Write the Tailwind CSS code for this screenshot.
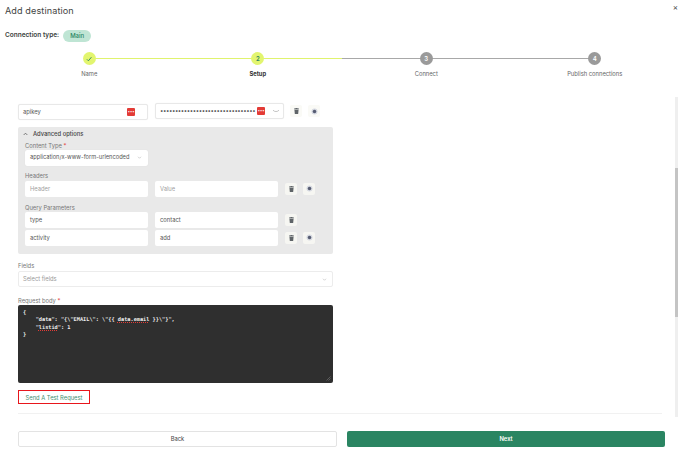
<!DOCTYPE html>
<html lang="en">
  <head>
    <meta charset="UTF-8" />
    <title>Add destination</title>
    <script src="https://cdn.jsdelivr.net/npm/@tailwindcss/browser@4"></script>
  </head>
  <body class="bg-white text-[#3b3f3e] font-['Inter',sans-serif]">
    <div class="relative w-[688px] h-[452px] overflow-hidden">
      <!-- Header -->
      <h1 class="pl-[5px] pt-[4px] h-[24px] text-[9.1px] leading-[13px] text-[#3f4443] font-normal tracking-[0.1px]">Add destination</h1>
      <button class="absolute right-[10px] top-[4px] text-[#444] text-[8px] leading-[6px]">×</button>

      <div class="flex items-center gap-[4px] pl-[5px] mt-[3px] pt-[4px] box-content h-[10px]">
        <span class="text-[6.5px] font-semibold">Connection type:</span>
        <span class="h-[12px] px-[7px] rounded-full bg-[#bfe5d4] text-[#2a8562] text-[6px] leading-[12px] font-medium">Main</span>
      </div>

      <!-- Stepper -->
      <div class="relative grid grid-cols-4 w-[674px] ml-[5px] mt-[11px] h-[30px]">
        <div class="absolute left-[84px] top-[6px] w-[253px] h-[1px] bg-[#e0f36e]"></div>
        <div class="absolute left-[337px] top-[6px] w-[253px] h-[1px] bg-[#a8a8a8]"></div>
        <div class="relative flex flex-col items-center">
          <span class="w-[13px] h-[13px] rounded-full bg-[#e2f56f] flex items-center justify-center">
            <svg width="6" height="6" viewBox="0 0 10 10" fill="none" stroke="#2a8562" stroke-width="1.5"><path d="M1.5 5.5l2.5 2.5 5-6"/></svg>
          </span>
          <span class="mt-[5px] text-[5.8px] leading-[8px] text-[#666]">Name</span>
        </div>
        <div class="relative flex flex-col items-center">
          <span class="w-[13px] h-[13px] rounded-full bg-[#e2f56f] text-[#2a8562] text-[6px] font-semibold flex items-center justify-center">2</span>
          <span class="mt-[5px] text-[5.8px] leading-[8px] font-bold text-[#333]">Setup</span>
        </div>
        <div class="relative flex flex-col items-center">
          <span class="w-[13px] h-[13px] rounded-full bg-[#9a9a9a] text-white text-[6px] font-semibold flex items-center justify-center">3</span>
          <span class="mt-[5px] text-[5.8px] leading-[8px] text-[#666]">Connect</span>
        </div>
        <div class="relative flex flex-col items-center">
          <span class="w-[13px] h-[13px] rounded-full bg-[#9a9a9a] text-white text-[6px] font-semibold flex items-center justify-center">4</span>
          <span class="mt-[5px] text-[5.8px] leading-[8px] text-[#666]">Publish connections</span>
        </div>
      </div>

      <!-- Scrollbar -->
      <div class="absolute left-[675px] top-[97px] w-[3px] h-[320px] bg-[#efefef]">
        <div class="mt-[71px] h-[149px] bg-[#c4c4c4]"></div>
      </div>

      <!-- Form -->
      <div class="pl-[18px] w-[333px] mt-[21px] box-content">
        <div class="flex items-start w-[315px]">
          <div class="w-[130px] h-[16px] mt-[1px] bg-white border border-[#e8e8e8] rounded-[2px] shadow-[0_0_1px_rgba(0,0,0,0.08)] flex items-center justify-between pl-[4px] pr-[12px] text-[5.8px] text-[#555]">
            <span>apikey</span>
            <span class="w-[8px] h-[8px] bg-[#e33b36] rounded-[1px] text-white text-[4px] leading-[7px] text-center">•••</span>
          </div>
          <div class="ml-[7px] w-[129px] h-[16px] bg-white border border-[#e8e8e8] rounded-[2px] shadow-[0_0_1px_rgba(0,0,0,0.08)] flex items-center pl-[4px] pr-[3px]">
            <span class="text-[6px] leading-[8px] tracking-[-0.4px] text-[#444] w-[97px] whitespace-nowrap">••••••••••••••••••••••••••••••••</span>
            <span class="w-[8px] h-[8px] bg-[#e33b36] rounded-[1px] text-white text-[4px] leading-[7px] text-center">•••</span>
            <svg class="ml-[7px]" width="8" height="5" viewBox="0 0 8 5" fill="none" stroke="#aaa" stroke-width="0.7"><path d="M1 1.2c1.5 1.8 4.500 1.800 6 0"/></svg>
          </div>
          <button class="ml-[6px] mt-[2px] w-[12px] h-[12px] rounded-[2px] bg-[#fafaf6] flex items-center justify-center">
            <svg width="5" height="6" viewBox="0 0 12 14" fill="#5f6468"><path d="M4 0h4l1 1h3v2H0V1h3zM1 4h10l-1 10H2z"/></svg>
          </button>
          <button class="ml-[6px] mt-[2px] w-[12px] h-[12px] rounded-[2px] bg-[#fafaf6] flex items-center justify-center">
            <svg width="7" height="7" viewBox="0 0 14 14"><circle cx="7" cy="7" r="6" fill="#d5d8e0"/><circle cx="7" cy="7" r="3.500" fill="#565c72"/></svg>
          </button>
        </div>

        <!-- Advanced options -->
        <div class="mt-[7px] w-[315px] h-[127px] bg-[#e9e9e9] rounded-[2px] pl-[7px] pt-[3px]">
          <div class="flex items-center h-[8px] text-[5.8px] font-medium text-[#444]">
            <svg class="ml-[-2px] mr-[5px]" width="5" height="4" viewBox="0 0 6 4" fill="none" stroke="#555" stroke-width="0.9"><path d="M0.8 3.200L3 1l2.200 2.200"/></svg>
            Advanced options
          </div>
          <div class="mt-[3px] text-[5.8px] leading-[9px] text-[#777]">Content Type <span class="text-[#e33b36]">*</span></div>
          <div class="w-[123px] h-[15.500px] bg-white rounded-[2px] shadow-[0_0_1px_rgba(0,0,0,0.1)] flex items-center justify-between pl-[5px] pr-[6px] text-[5.7px] text-[#555]">
            <span class="whitespace-nowrap">application/x-www-form-urlencoded</span>
            <svg width="5" height="3" viewBox="0 0 6 4" fill="none" stroke="#aaa" stroke-width="0.7"><path d="M1 1l2 2 2-2"/></svg>
          </div>
          <div class="mt-[5px] text-[5.8px] leading-[9px] text-[#777]">Headers</div>
          <div class="flex items-center mt-[1px]">
            <div class="w-[123px] h-[16px] bg-white rounded-[2px] pl-[5px] text-[5.8px] leading-[15px] text-[#a0a0a0]">Header</div>
            <div class="ml-[7px] w-[123px] h-[16px] bg-white rounded-[2px] pl-[5px] text-[5.8px] leading-[15px] text-[#a0a0a0]">Value</div>
            <button class="ml-[7px] w-[12px] h-[12px] rounded-[2px] bg-[#f6f6f2] flex items-center justify-center">
              <svg width="5" height="6" viewBox="0 0 12 14" fill="#5f6468"><path d="M4 0h4l1 1h3v2H0V1h3zM1 4h10l-1 10H2z"/></svg>
            </button>
            <button class="ml-[6px] w-[12px] h-[12px] rounded-[2px] bg-[#f6f6f2] flex items-center justify-center">
              <svg width="7" height="7" viewBox="0 0 14 14"><circle cx="7" cy="7" r="6" fill="#d5d8e0"/><circle cx="7" cy="7" r="3.500" fill="#565c72"/></svg>
            </button>
          </div>
          <div class="mt-[6px] text-[5.8px] leading-[9px] text-[#777]">Query Parameters</div>
          <div class="flex items-center">
            <div class="w-[123px] h-[16px] bg-white rounded-[2px] pl-[5px] text-[5.8px] leading-[15px] text-[#555]">type</div>
            <div class="ml-[7px] w-[123px] h-[16px] bg-white rounded-[2px] pl-[5px] text-[5.8px] leading-[15px] text-[#555]">contact</div>
            <button class="ml-[7px] w-[12px] h-[12px] rounded-[2px] bg-[#f6f6f2] flex items-center justify-center">
              <svg width="5" height="6" viewBox="0 0 12 14" fill="#5f6468"><path d="M4 0h4l1 1h3v2H0V1h3zM1 4h10l-1 10H2z"/></svg>
            </button>
          </div>
          <div class="flex items-center mt-[2px]">
            <div class="w-[123px] h-[16px] bg-white rounded-[2px] pl-[5px] text-[5.8px] leading-[15px] text-[#555]">activity</div>
            <div class="ml-[7px] w-[123px] h-[16px] bg-white rounded-[2px] pl-[5px] text-[5.8px] leading-[15px] text-[#555]">add</div>
            <button class="ml-[7px] w-[12px] h-[12px] rounded-[2px] bg-[#f6f6f2] flex items-center justify-center">
              <svg width="5" height="6" viewBox="0 0 12 14" fill="#5f6468"><path d="M4 0h4l1 1h3v2H0V1h3zM1 4h10l-1 10H2z"/></svg>
            </button>
            <button class="ml-[6px] w-[12px] h-[12px] rounded-[2px] bg-[#f6f6f2] flex items-center justify-center">
              <svg width="7" height="7" viewBox="0 0 14 14"><circle cx="7" cy="7" r="6" fill="#d5d8e0"/><circle cx="7" cy="7" r="3.500" fill="#565c72"/></svg>
            </button>
          </div>
        </div>

        <!-- Fields -->
        <div class="mt-[7px] text-[5.8px] leading-[9px] text-[#777]">Fields</div>
        <div class="mt-[1px] w-[315px] h-[16px] bg-white border border-[#ececec] rounded-[2px] flex items-center justify-between pl-[4px] pr-[5px] text-[5.8px] text-[#999]">
          <span>Select fields</span>
          <svg width="5" height="3" viewBox="0 0 6 4" fill="none" stroke="#aaa" stroke-width="0.7"><path d="M1 1l2 2 2-2"/></svg>
        </div>

        <!-- Request body -->
        <div class="mt-[9px] text-[5.8px] leading-[9px] text-[#777]">Request body <span class="text-[#e33b36]">*</span></div>
        <div class="relative w-[315px] h-[78px] bg-[#2f2f2f] rounded-[2px] pl-[5px] pt-[4px] font-['DejaVu_Sans_Mono',monospace] text-[5.250px] leading-[7.300px] text-[#f0f0f0] font-bold whitespace-pre"><div>{</div><div>    "data": "{\"EMAIL\": \"{{ <span class="underline decoration-dotted decoration-[#e33b36] decoration-[0.6px] underline-offset-[1px]">data.email</span> }}\"}",</div><div>    "<span class="underline decoration-dotted decoration-[#e33b36] decoration-[0.6px] underline-offset-[1px]">listid</span>": 1</div><div>}</div>
          <svg class="absolute right-[2px] bottom-[2px]" width="5" height="5" viewBox="0 0 5 5" stroke="#888" stroke-width="0.5"><path d="M0.500 4.500l4-4M2.500 4.500l2-2"/></svg>
        </div>

        <button class="block mt-[7px] w-[72px] h-[14px] border-[1.5px] border-[#e8161c] text-[#3f8f70] text-[5.8px] leading-[11px] text-center">Send A Test Request</button>
      </div>

      <div class="absolute left-[18px] top-[413px] w-[644px] h-[1px] bg-[#f1f1f1]"></div>

      <!-- Footer -->
      <div class="absolute left-[18px] top-[431px] flex w-[647px] gap-[10px]">
        <button class="w-[319px] h-[16px] bg-white border border-[#e3e3e3] rounded-[2px] text-[5.8px] text-[#444]">Back</button>
        <button class="w-[318px] h-[16px] bg-[#2a8562] rounded-[2px] text-[5.8px] font-semibold text-white">Next</button>
      </div>
    </div>
  </body>
</html>
